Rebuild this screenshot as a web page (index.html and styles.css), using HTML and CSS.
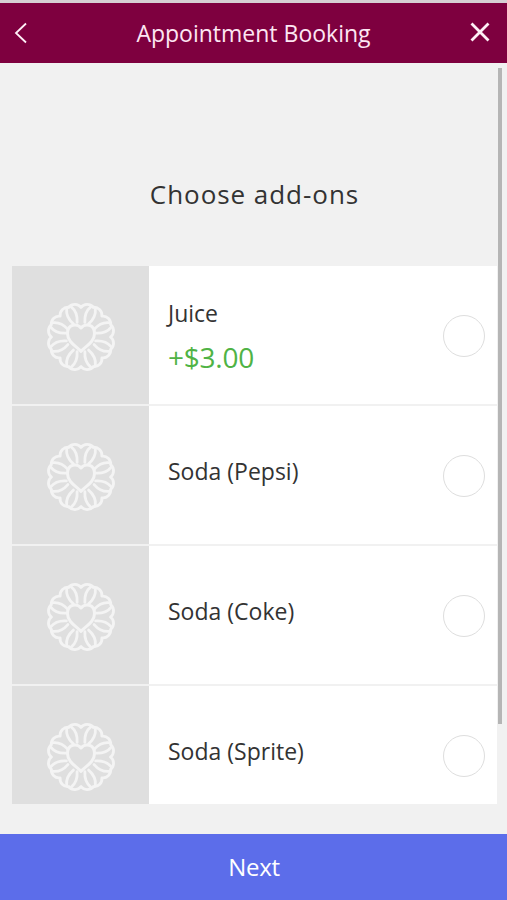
FILE: index.html
```html
<!DOCTYPE html>
<html lang="en">
<head>
<meta charset="utf-8">
<title>Appointment Booking</title>
<link rel="stylesheet" href="styles.css">
</head>
<body>
<svg class="defs" width="0" height="0" aria-hidden="true">
  <defs>
    <g id="petal">
      <path d="M-12.300-29.800C-9-33.500-3-33.500 0-29.500C3-33.500 9-33.500 12.300-29.800"/>
      <path transform="rotate(22.500)" d="M-2-15C-4.500-20-5.500-26-2.500-31.500M2-15C4.500-20 5.500-26 2.500-31.500"/>
    </g>
    <symbol id="flower" viewBox="-37 -37 74 74">
      <g fill="none" stroke="#f4f4f4" stroke-width="2.800" stroke-linecap="round" stroke-linejoin="round">
        <use href="#petal"/>
        <use href="#petal" transform="rotate(45)"/>
        <use href="#petal" transform="rotate(90)"/>
        <use href="#petal" transform="rotate(135)"/>
        <use href="#petal" transform="rotate(180)"/>
        <use href="#petal" transform="rotate(225)"/>
        <use href="#petal" transform="rotate(270)"/>
        <use href="#petal" transform="rotate(315)"/>
        <path class="heart" d="M0 14.500C-3 10-13.500 6-13.500-3.500C-13.500-13-4-14-0-9C4-14 13.500-13 13.500-3.500C13.500 6 3 10 0 14.500Z"/>
      </g>
    </symbol>
  </defs>
</svg>
<div class="app">
  <header class="bar">
    <svg class="back" viewBox="0 0 14 22"><path d="M12 1.500L2 11L12 20.500"/></svg>
    <h1 class="title">Appointment Booking</h1>
    <svg class="close" viewBox="0 0 20 20"><path d="M1.500 1.500L18.500 18.500M18.500 1.500L1.500 18.500"/></svg>
  </header>
  <main class="content">
    <h2 class="heading">Choose add-ons</h2>
    <div class="list">
      <div class="item">
        <div class="thumb"><svg class="flower"><use href="#flower"/></svg></div>
        <div class="info priced"><div class="name">Juice</div><div class="price">+$3.00</div></div>
        <span class="radio"></span>
      </div>
      <div class="item">
        <div class="thumb"><svg class="flower"><use href="#flower"/></svg></div>
        <div class="info"><div class="name">Soda (Pepsi)</div></div>
        <span class="radio"></span>
      </div>
      <div class="item">
        <div class="thumb"><svg class="flower"><use href="#flower"/></svg></div>
        <div class="info"><div class="name">Soda (Coke)</div></div>
        <span class="radio"></span>
      </div>
      <div class="item">
        <div class="thumb"><svg class="flower"><use href="#flower"/></svg></div>
        <div class="info"><div class="name">Soda (Sprite)</div></div>
        <span class="radio"></span>
      </div>
    </div>
    <div class="scrollbar"></div>
  </main>
  <button class="next">Next</button>
</div>
</body>
</html>
```
FILE: styles.css
```css
* { box-sizing: border-box; }
body { margin: 0; font-family: "Open Sans", "Noto Sans", sans-serif; color: #333; }
.defs { position: absolute; }
.app { height: 900px; display: flex; flex-direction: column; background: #f1f1f1; overflow: hidden; }
.bar {
  height: 63px; flex: none; display: grid; grid-template-columns: 34px 1fr 34px; align-items: center;
  padding: 0 17px 0 14px; border-top: 3px solid #d6cfd3; background: #7e003f; color: #fde6f3;
}
.title { margin: 0; font-size: 23px; line-height: 32px; font-weight: 400; white-space: nowrap; text-align: center; padding-left: 3px; }
.back, .close { fill: none; stroke: #fff0f7; stroke-width: 1.8; }
.back { width: 14px; height: 22px; }
.close { width: 20px; height: 20px; stroke-width: 2.8; margin-bottom: 3px; justify-self: end; }
.content { position: relative; flex: 1; min-height: 0; padding: 111px 10px 0 12px; }
.heading { margin: 0 0 52px; font-size: 26px; line-height: 40px; font-weight: 400; letter-spacing: 0.95px; text-align: center; }
.list { height: 538px; overflow: hidden; }
.item { display: flex; align-items: center; height: 138px; margin-bottom: 2px; padding-right: 12px; background: #fff; }
.thumb { width: 137px; height: 138px; flex: none; display: flex; align-items: center; justify-content: center; background: #dfdfdf; }
.flower { width: 74px; height: 74px; margin-top: 3px; }
.heart { fill: #dfdfdf; stroke-width: 3; }
.info { flex: 1; padding-left: 19px; margin-bottom: 8px; }
.priced { margin-bottom: 0; padding-top: 2px; }
.name { font-size: 23px; line-height: 32px; }
.price { margin-top: 9px; font-size: 28px; letter-spacing: -0.25px; line-height: 38px; color: #4fb345; }
.radio { width: 42px; height: 42px; margin-top: 1px; border: 1.5px solid #dedede; border-radius: 50%; }
.scrollbar { position: absolute; top: 5px; right: 5px; width: 4px; height: 656px; background: #b5b5b5; }
.next { height: 66px; flex: none; border: 0; padding: 0 0 0 1px; background: #5c6dea; color: #fff; font: 24px/66px "Open Sans", "Noto Sans", sans-serif; letter-spacing: -0.3px; }
```
